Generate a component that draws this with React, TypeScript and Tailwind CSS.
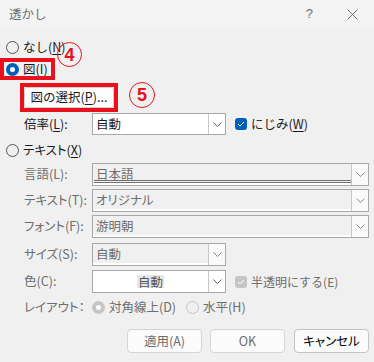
import React from "react";

const font = "font-['Noto_Sans_CJK_JP','Noto_Sans',sans-serif]";
const palt = "[font-feature-settings:'palt']";

function Chevron({ color = "#606060" }: { color?: string }) {
  return (
    <svg width="9" height="5" viewBox="0 0 9 5">
      <path d="M0.5 0.5 L4.5 4.5 L8.5 0.5" fill="none" stroke={color} strokeWidth="1" />
    </svg>
  );
}

function Radio({ state }: { state: "off" | "on" | "disabledOn" | "disabledOff" }) {
  if (state === "on")
    return (
      <span className="w-[13px] h-[13px] rounded-full bg-[#005fb8] flex items-center justify-center shrink-0">
        <span className="w-[5px] h-[5px] rounded-full bg-white" />
      </span>
    );
  if (state === "disabledOn")
    return (
      <span className="w-[13px] h-[13px] rounded-full bg-[#c5c5c5] flex items-center justify-center shrink-0">
        <span className="w-[5px] h-[5px] rounded-full bg-white" />
      </span>
    );
  return (
    <span
      className={
        "block w-[13px] h-[13px] rounded-full border bg-transparent shrink-0 " +
        (state === "off" ? "border-[#555555]" : "border-[#c5c5c5]")
      }
    />
  );
}

function Check({ disabled }: { disabled?: boolean }) {
  return (
    <span
      className={
        "w-[12px] h-[12px] rounded-[3px] flex items-center justify-center shrink-0 " +
        (disabled ? "bg-[#c5c5c5]" : "bg-[#005fb8]")
      }
    >
      <svg width="8" height="6" viewBox="0 0 8 6">
        <path d="M1 3 L3 5 L7 1" fill="none" stroke="white" strokeWidth="1" />
      </svg>
    </span>
  );
}

function U({ c }: { c: string }) {
  return <span className="underline underline-offset-[2px] decoration-1">{c}</span>;
}

function DisabledSelect({ text, double, p }: { text: string; double?: boolean; p?: boolean }) {
  return (
    <div className="w-[277px] h-[23px] border border-[#a8a8a8] flex bg-[#f0f0f0]">
      <div
        className={
          "flex-1 h-full relative flex items-start pl-[3px] shadow-[inset_0_-2px_0_#ffffff] text-[#6d6d6d] leading-[19px] " +
          (p ? palt : "")
        }
      >
        {text}
        {double && (
          <div className="absolute left-[1px] right-0 top-[16px] h-[3px] border-b-[3px] border-double border-[#707070]" />
        )}
      </div>
      <div className="w-[17px] h-full bg-[#fafafa] border-l border-[#c8c8c8] flex items-center justify-center">
        <Chevron color="#8a8a8a" />
      </div>
    </div>
  );
}

export default function App() {
  const label = "w-[68px] shrink-0";
  return (
    <div className={"w-[374px] h-[362px] bg-[#f0f0f0] relative overflow-hidden text-[12.5px] text-[#1a1a1a] " + font}>
      {/* title bar */}
      <div className="h-[28px] bg-[#f3f3f3] flex items-center pl-[9px] pr-[16px]">
        <span className="text-[#6e6e6e] text-[12.5px]">透かし</span>
        <span className="ml-auto text-[#6e6e6e] text-[13px] font-['Liberation_Sans',sans-serif] mr-[34px]">?</span>
        <svg width="11" height="11" viewBox="0 0 11 11">
          <path d="M0.5 0.5 L10.5 10.5 M10.5 0.5 L0.5 10.5" stroke="#6e6e6e" strokeWidth="1" />
        </svg>
      </div>

      <div className="flex flex-col">
        {/* なし */}
        <div className="mt-[10px] h-[18px] flex items-center pl-[6px] gap-[4px]">
          <Radio state="off" />
          <span>
            なし(<U c="N" />)
          </span>
        </div>
        {/* 図 */}
        <div className="mt-[4px] h-[18px] flex items-center pl-[6px] gap-[4px]">
          <Radio state="on" />
          <span>
            図(<U c="I" />)
          </span>
        </div>
        {/* 図の選択 button */}
        <div className="mt-[9px] h-[21px] flex pl-[24px]">
          <div className="w-[90px] h-[21px] bg-[#fdfdfd] border border-[#d0d0d0] rounded-[3px] flex items-center justify-center">
            図の選択(<U c="P" />)...
          </div>
        </div>
        {/* 倍率 */}
        <div className="mt-[5px] h-[22px] flex items-center pl-[24px]">
          <span className={label}>
            倍率(<U c="L" />):
          </span>
          <div className="w-[134px] h-[22px] border border-[#a8a8a8] bg-white flex">
            <div className="flex-1 pl-[3px] leading-[20px]">自動</div>
            <div className="w-[17px] h-full border-l border-[#c8c8c8] flex items-center justify-center">
              <Chevron />
            </div>
          </div>
          <div className="ml-[9px] flex items-center gap-[4px]">
            <Check />
            <span>
              にじみ(<U c="W" />)
            </span>
          </div>
        </div>
        {/* テキスト(X) */}
        <div className="mt-[6px] h-[18px] flex items-center pl-[6px] gap-[4px]">
          <Radio state="off" />
          <span className={palt}>
            テキスト(<U c="X" />)
          </span>
        </div>
        {/* 言語 */}
        <div className="mt-[4px] h-[23px] flex items-center pl-[24px] text-[#6d6d6d]">
          <span className={label}>言語(L):</span>
          <DisabledSelect text="日本語" double />
        </div>
        <div className="mt-[3px] h-[23px] flex items-center pl-[24px] text-[#6d6d6d]">
          <span className={label + " " + palt}>テキスト(T):</span>
          <DisabledSelect text="オリジナル" p />
        </div>
        <div className="mt-[3px] h-[23px] flex items-center pl-[24px] text-[#6d6d6d]">
          <span className={label + " " + palt}>フォント(F):</span>
          <DisabledSelect text="游明朝" />
        </div>
        {/* サイズ */}
        <div className="mt-[5px] h-[23px] flex items-center pl-[24px] text-[#6d6d6d]">
          <span className={label + " " + palt}>サイズ(S):</span>
          <div className="w-[134px] h-[23px] border border-[#a8a8a8] bg-[#f0f0f0] flex">
            <div className="flex-1 pl-[3px] leading-[20px] shadow-[inset_0_-2px_0_#ffffff]">自動</div>
            <div className="w-[17px] h-full bg-[#fafafa] border-l border-[#c8c8c8] flex items-center justify-center">
              <Chevron color="#8a8a8a" />
            </div>
          </div>
        </div>
        {/* 色 */}
        <div className="mt-[4px] h-[23px] flex items-center pl-[24px] text-[#6d6d6d]">
          <span className={label}>色(C):</span>
          <div className="w-[134px] h-[23px] border border-[#a8a8a8] bg-white flex">
            <div className="flex-1 flex items-center justify-center">
              <span className="bg-[#e8e8e8] px-[1px] leading-[13px] text-[#555555]">自動</span>
            </div>
            <div className="w-[17px] h-full border-l border-[#c8c8c8] flex items-center justify-center">
              <Chevron />
            </div>
          </div>
          <div className="ml-[9px] flex items-center gap-[4px]">
            <Check disabled />
            <span className="text-[12px]">半透明にする(E)</span>
          </div>
        </div>
        {/* レイアウト */}
        <div className="mt-[6px] h-[16px] flex items-center pl-[24px] text-[#6d6d6d]">
          <span className={label + " " + palt}>レイアウト：</span>
          <Radio state="disabledOn" />
          <span className="ml-[4px]">対角線上(D)</span>
          <span className="ml-[10px] flex items-center">
            <Radio state="disabledOff" />
          </span>
          <span className="ml-[4px]">水平(H)</span>
        </div>
        {/* buttons */}
        <div className="mt-[14px] h-[24px] flex pl-[127px]">
          <div className="w-[75px] h-[24px] bg-[#fbfbfb] border border-[#d5d5d5] rounded-[4px] flex items-center justify-center text-[#6d6d6d]">
            適用(A)
          </div>
          <div className="ml-[8px] w-[75px] h-[24px] bg-[#fbfbfb] border border-[#d5d5d5] rounded-[4px] flex items-center justify-center text-[#6d6d6d]">
            OK
          </div>
          <div className={"ml-[9px] w-[75px] h-[24px] bg-[#fbfbfb] border border-[#c4c4c4] rounded-[4px] flex items-center justify-center text-black " + palt}>
            キャンセル
          </div>
        </div>
      </div>

      {/* annotations */}
      <div className="absolute left-0 top-[58px] w-[55px] h-[22px] border-[4px] border-[#e8121c]" />
      <div className="absolute left-[20px] top-[83px] w-[98px] h-[29px] border-[4px] border-[#e8121c]" />
      <div className="absolute left-[57px] top-[42px] w-[25px] h-[25px] rounded-full border-[1.5px] border-[#e8121c] flex items-center justify-center text-[#e8121c] text-[18px] font-bold leading-none font-['Liberation_Sans',sans-serif]">
        4
      </div>
      <div className="absolute left-[129px] top-[82px] w-[26px] h-[26px] rounded-full border-[1.5px] border-[#e8121c] flex items-center justify-center text-[#e8121c] text-[18px] font-bold leading-none font-['Liberation_Sans',sans-serif]">
        5
      </div>
    </div>
  );
}
